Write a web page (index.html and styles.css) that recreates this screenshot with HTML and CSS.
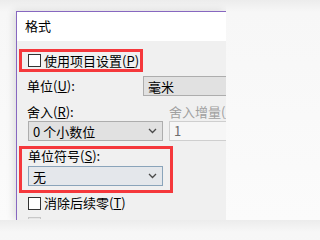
FILE: index.html
```
<!DOCTYPE html>
<html lang="zh">
<head>
<meta charset="utf-8">
<link rel="stylesheet" href="styles.css">
</head>
<body>
<div class="dialog">
  <div class="titlebar">格式</div>
  <div class="content">
    <div class="hl hl-top">
      <label class="check"><span class="box"></span><span>使用项目设置(<u>P</u>)</span></label>
    </div>
    <div class="row unit-row">
      <span class="label">单位(<u>U</u>):</span>
      <div class="combo combo-wide">毫米</div>
    </div>
    <div class="row labels-row">
      <span class="label">舍入(<u>R</u>):</span>
      <span class="label disabled clip-label">舍入增量(<u>E</u>):</span>
    </div>
    <div class="row fields-row">
      <div class="combo combo-narrow">0 个小数位<span class="chev"><svg width="9" height="6" viewBox="0 0 9 6"><path d="M1 1 L4.5 4.5 L8 1" fill="none" stroke="#4a4a4a" stroke-width="1.3"/></svg></span></div>
      <div class="input disabled-input">1</div>
    </div>
    <div class="hl hl-bottom">
      <span class="label">单位符号(<u>S</u>):</span>
      <div class="combo combo-narrow combo-focus">无<span class="chev"><svg width="9" height="6" viewBox="0 0 9 6"><path d="M1 1 L4.5 4.5 L8 1" fill="none" stroke="#4a4a4a" stroke-width="1.3"/></svg></span></div>
    </div>
    <label class="check check-plain"><span class="box"></span><span>消除后续零(<u>T</u>)</span></label>
    <div class="check-next"><span class="box-dis"></span></div>
  </div>
</div>
</body>
</html>
```
FILE: styles.css
```
html, body {
  margin: 0;
  padding: 0;
}
body {
  width: 226px;
  height: 220px;
  overflow: hidden;
  background: linear-gradient(#ececec, #f7f7f7 12px, #fbfbfb);
  font-family: "Noto Sans CJK SC", "Microsoft YaHei", sans-serif;
  font-size: 13px;
  color: #000;
}
.dialog {
  margin: 11px 0 0 16px;
  width: 209px;
  height: 208px;
  overflow: hidden;
  border-top: 1px solid #8767c0;
  border-left: 1px solid #8767c0;
  background: #f0f0f0;
  box-shadow: -2px 0 8px rgba(0,0,0,0.12);
}
.titlebar {
  height: 29px;
  line-height: 28px;
  padding-left: 8px;
  background: #fff;
}
.content {
  padding-top: 8px;
}
.hl {
  border: 3px solid #f5383c;
  margin-left: 2px;
}
.hl-top {
  width: 112px;
  height: 17px;
  display: flex;
  align-items: center;
  padding-left: 6px;
}
.check {
  display: flex;
  align-items: center;
  gap: 3px;
  line-height: 14px;
  white-space: nowrap;
}
.box {
  width: 11px;
  height: 11px;
  border: 1px solid #333;
  background: #fff;
  flex: none;
}
u {
  text-decoration: underline;
  text-underline-offset: 1px;
}
.row {
  display: flex;
  align-items: center;
  white-space: nowrap;
}
.label {
  line-height: 14px;
  white-space: nowrap;
}
.unit-row {
  margin-top: 4px;
  padding-left: 10px;
  height: 20px;
}
.unit-row .label {
  width: 116px;
}
.combo {
  box-sizing: border-box;
  height: 20px;
  border: 1px solid #adadad;
  background: #e1e1e1;
  display: flex;
  align-items: center;
  padding-left: 4px;
  position: relative;
  white-space: nowrap;
}
.combo-wide {
  width: 83px;
  border-right: none;
}
.combo-narrow {
  width: 135px;
}
.chev {
  position: absolute;
  right: 5px;
  top: 6px;
  display: flex;
}
.labels-row {
  margin-top: 9px;
  padding-left: 10px;
  height: 14px;
}
.labels-row .label:first-child {
  width: 142px;
  flex: none;
}
.clip-label {
  width: 57px;
  overflow: hidden;
}
.disabled {
  color: #a0a0a0;
}
.fields-row {
  margin-top: 2px;
  padding-left: 11px;
  gap: 6px;
}
.input {
  box-sizing: border-box;
  height: 20px;
  width: 57px;
  border: 1px solid #cfcfcf;
  border-right: none;
  background: #f6f6f6;
  color: #6d6d6d;
  padding-left: 4px;
  line-height: 18px;
}
.hl-bottom {
  margin-top: 5px;
  width: 142px;
  padding: 0 0 4px 6px;
  height: 37px;
}
.hl-bottom .label {
  display: block;
  height: 15px;
  line-height: 14px;
}
.combo-focus {
  margin-top: 2px;
  border-color: #8aa4ba;
  background: #e4e7eb;
}
.check-plain {
  margin: 3px 0 0 11px;
}
.check-next {
  margin: 7px 0 0 11px;
  height: 2px;
  overflow: hidden;
}
.box-dis {
  display: block;
  width: 11px;
  height: 11px;
  border: 1px solid #c8c8c8;
  background: #e6e6e6;
}
```
